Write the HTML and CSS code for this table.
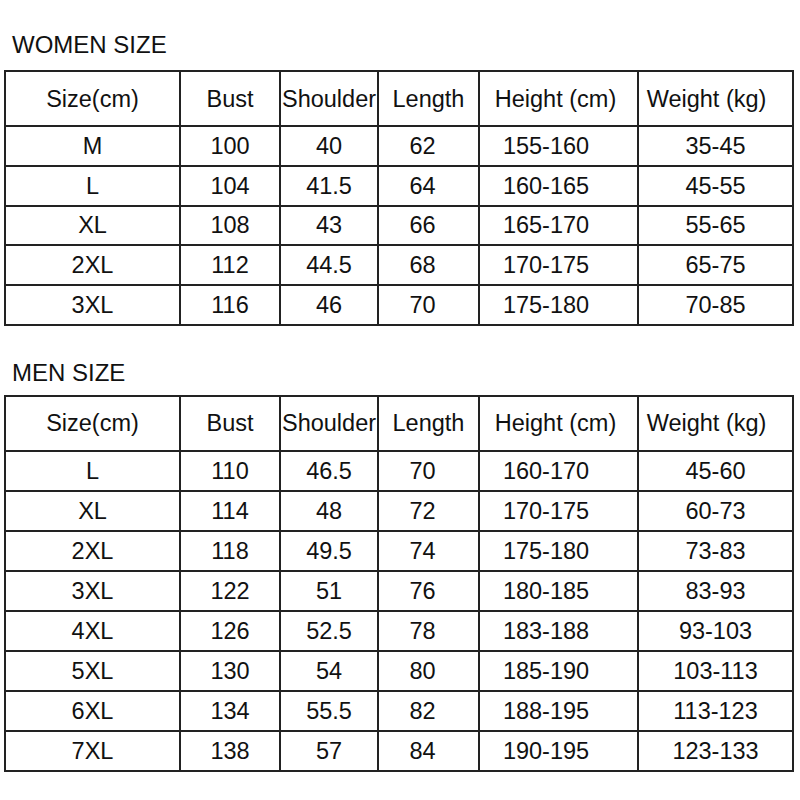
FILE: index.html
```html
<!DOCTYPE html>
<html>
<head>
<meta charset="utf-8">
<link rel="stylesheet" href="styles.css">
</head>
<body>
<section class="chart women">
  <h2 class="title">WOMEN SIZE</h2>
  <table class="sizes">
    <colgroup>
      <col class="c-size"><col class="c-bust"><col class="c-shoulder"><col class="c-length"><col class="c-height"><col class="c-weight">
    </colgroup>
    <thead>
      <tr><th>Size(cm)</th><th>Bust</th><th>Shoulder</th><th>Length</th><th class="h-height">Height (cm)</th><th class="h-weight">Weight (kg)</th></tr>
    </thead>
    <tbody>
      <tr><td>M</td><td>100</td><td>40</td><td class="d-length">62</td><td class="d-height">155-160</td><td>35-45</td></tr>
      <tr><td>L</td><td>104</td><td>41.5</td><td class="d-length">64</td><td class="d-height">160-165</td><td>45-55</td></tr>
      <tr><td>XL</td><td>108</td><td>43</td><td class="d-length">66</td><td class="d-height">165-170</td><td>55-65</td></tr>
      <tr><td>2XL</td><td>112</td><td>44.5</td><td class="d-length">68</td><td class="d-height">170-175</td><td>65-75</td></tr>
      <tr><td>3XL</td><td>116</td><td>46</td><td class="d-length">70</td><td class="d-height">175-180</td><td>70-85</td></tr>
    </tbody>
  </table>
</section>
<section class="chart men">
  <h2 class="title">MEN SIZE</h2>
  <table class="sizes">
    <colgroup>
      <col class="c-size"><col class="c-bust"><col class="c-shoulder"><col class="c-length"><col class="c-height"><col class="c-weight">
    </colgroup>
    <thead>
      <tr><th>Size(cm)</th><th>Bust</th><th>Shoulder</th><th>Length</th><th class="h-height">Height (cm)</th><th class="h-weight">Weight (kg)</th></tr>
    </thead>
    <tbody>
      <tr><td>L</td><td>110</td><td>46.5</td><td class="d-length">70</td><td class="d-height">160-170</td><td>45-60</td></tr>
      <tr><td>XL</td><td>114</td><td>48</td><td class="d-length">72</td><td class="d-height">170-175</td><td>60-73</td></tr>
      <tr><td>2XL</td><td>118</td><td>49.5</td><td class="d-length">74</td><td class="d-height">175-180</td><td>73-83</td></tr>
      <tr><td>3XL</td><td>122</td><td>51</td><td class="d-length">76</td><td class="d-height">180-185</td><td>83-93</td></tr>
      <tr><td>4XL</td><td>126</td><td>52.5</td><td class="d-length">78</td><td class="d-height">183-188</td><td>93-103</td></tr>
      <tr><td>5XL</td><td>130</td><td>54</td><td class="d-length">80</td><td class="d-height">185-190</td><td>103-113</td></tr>
      <tr><td>6XL</td><td>134</td><td>55.5</td><td class="d-length">82</td><td class="d-height">188-195</td><td>113-123</td></tr>
      <tr><td>7XL</td><td>138</td><td>57</td><td class="d-length">84</td><td class="d-height">190-195</td><td>123-133</td></tr>
    </tbody>
  </table>
</section>
</body>
</html>
```
FILE: styles.css
```css
html, body {
  margin: 0;
  padding: 0;
  background: #fff;
}
body {
  font-family: "Liberation Sans", Arial, sans-serif;
  color: #111;
  width: 800px;
  height: 800px;
  overflow: hidden;
}
.chart {
  padding-left: 4px;
}
.title {
  margin: 31px 0 11px 8px;
  font-size: 24px;
  font-weight: normal;
  line-height: 28px;
}
.men .title {
  margin-top: 33px;
  margin-bottom: 8px;
}
.sizes {
  table-layout: fixed;
  border-collapse: separate;
  border-spacing: 2px;
  background: #222;
  width: 790px;
  font-size: 23.5px;
}
.c-size { width: 173px; }
.c-bust { width: 98px; }
.c-shoulder { width: 96px; }
.c-length { width: 99px; }
.c-height { width: 157px; }
.c-weight { width: 153px; }
.sizes th,
.sizes td {
  background: #fff;
  padding: 0;
  text-align: center;
  white-space: nowrap;
  overflow: visible;
  font-weight: normal;
  line-height: 26px;
}
.sizes th {
  height: 53px;
}
.sizes td {
  height: 38px;
}
.women .sizes td {
  height: 37.75px;
}
.h-height { padding-right: 6px !important; }
.h-weight { padding-right: 18px !important; }
.d-length { padding-right: 12px !important; }
.d-height { padding-right: 25px !important; }
```
